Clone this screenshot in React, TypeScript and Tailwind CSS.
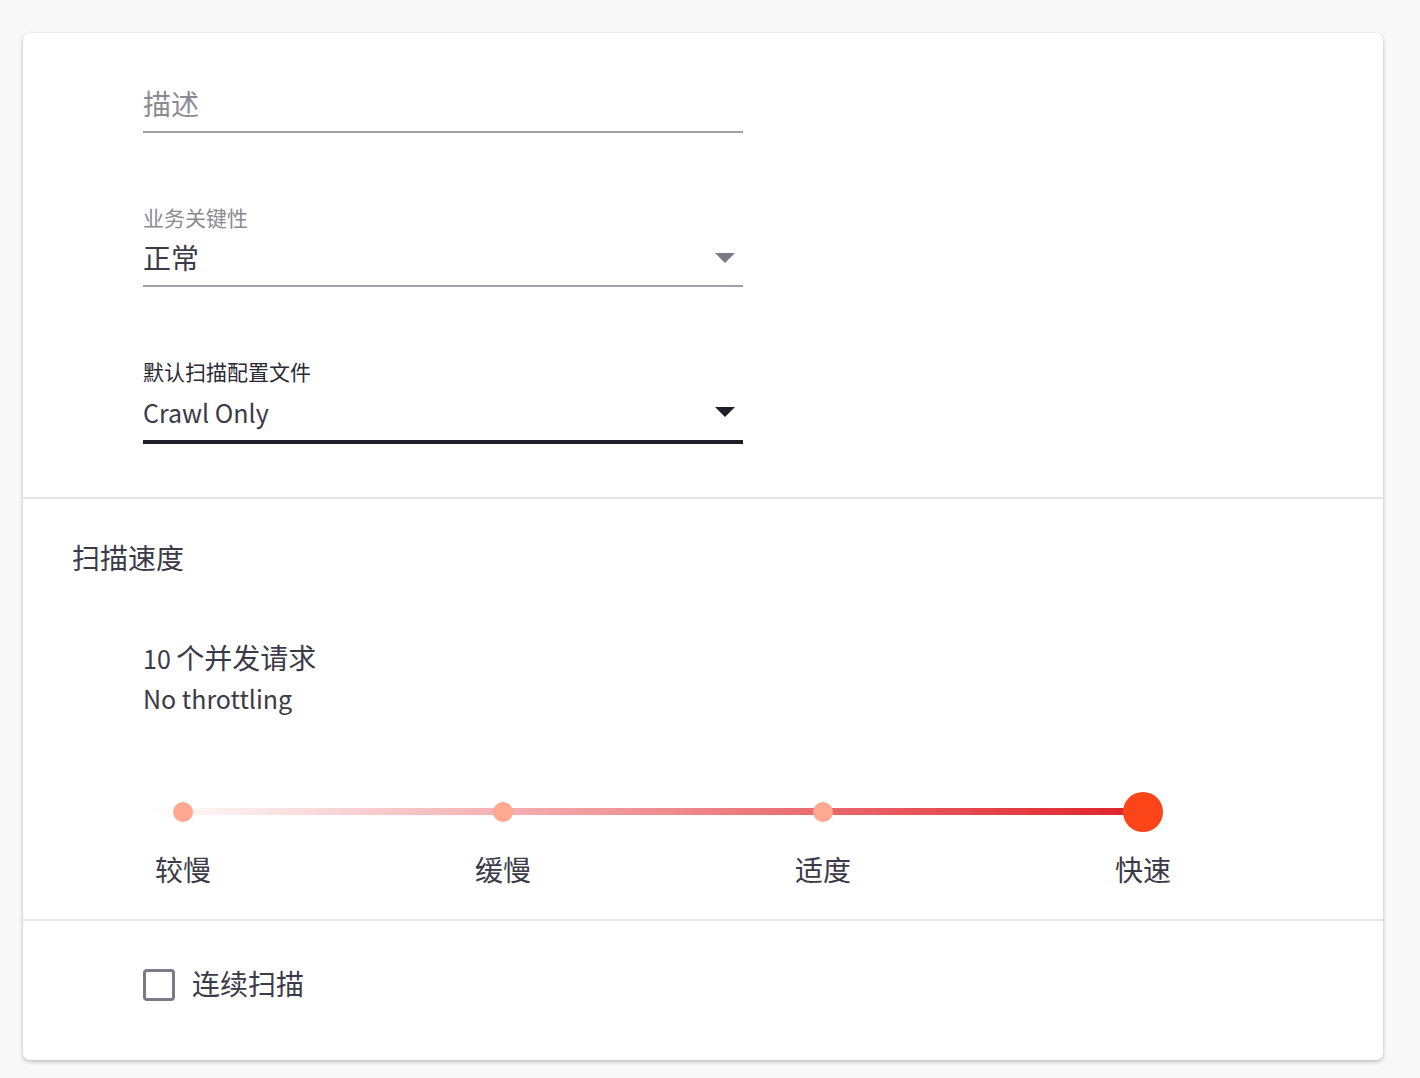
import React from 'react';

const font = { fontFamily: '"Noto Sans CJK SC", "Noto Sans", sans-serif' };

function Arrow({ dark }: { dark?: boolean }) {
  return (
    <svg width="20" height="10" viewBox="0 0 20 10" className="mr-[8px] mt-[2px]">
      <path d="M0 0 L20 0 L10 10 Z" fill={dark ? '#1f1e2a' : '#7b7a85'} />
    </svg>
  );
}

interface FieldProps {
  label?: string;
  value: React.ReactNode;
  placeholder?: boolean;
  focused?: boolean;
  select?: boolean;
  className?: string;
}

function Field({ label, value, placeholder, focused, select, className = '' }: FieldProps) {
  return (
    <div className={`w-[600px] ${className}`}>
      <div className={`h-[28px] text-[21px] leading-[28px] ${focused ? 'text-[#2a2936]' : 'text-[#8b8a93]'}`}>
        {label}
      </div>
      <div className="mt-[6px] flex h-[40px] items-center justify-between">
        <span className={`text-[28px] leading-[40px] ${placeholder ? 'text-[#8b8a93]' : 'text-[#3b3a48]'}`}>
          {value}
        </span>
        {select && <Arrow dark={focused} />}
      </div>
      {focused ? (
        <div className="mt-[9px] h-[4px] bg-[#1f1e2a]" />
      ) : (
        <div className="mt-[8px] h-[2px] bg-[#a09fa7]" />
      )}
    </div>
  );
}

const speeds = ['较慢', '缓慢', '适度', '快速'];

export default function App() {
  return (
    <div className="min-h-screen bg-[#f8f8f8] pt-[33px] pl-[23px] pb-[18px]" style={font}>
      <div className="w-[1360px] rounded-[7px] bg-white shadow-[0_2px_4px_rgba(0,0,0,0.22),0_0_3px_rgba(0,0,0,0.06)]">
        {/* Details */}
        <div className="border-b-2 border-[#e4e4e6] pt-[16px] pb-[53px] pl-[120px]">
          <Field value="描述" placeholder />
          <Field className="mt-[70px]" label="业务关键性" value="正常" select />
          <Field
            className="mt-[70px]"
            label="默认扫描配置文件"
            value={<span className="text-[25px]">Crawl Only</span>}
            select
            focused
          />
        </div>

        {/* Scan speed */}
        <div className="border-b-2 border-[#e4e4e6] pt-[38px] pb-[30px] text-[#3b3a48]">
          <div className="pl-[49px] text-[28px] leading-[40px]">扫描速度</div>
          <div className="mt-[60px] pl-[120px] text-[28px] leading-[40px]">
            <div className="h-[40px]">
              <span className="text-[25px]">10 </span>个并发请求
            </div>
            <div className="h-[40px]">
              <span className="text-[25px]">No throttling</span>
            </div>
          </div>

          <div className="relative mt-[75px] h-[40px]">
            <div className="absolute left-[125px] top-[16px] h-[7px] w-[1000px] rounded-full bg-[linear-gradient(to_right,#ffffff,#df2027)]" />
            <div className="relative flex h-[40px]">
              {speeds.map((s, i) => (
                <div key={s} className="flex w-[320px] items-center justify-center">
                  {i === speeds.length - 1 ? (
                    <div className="h-[40px] w-[40px] rounded-full bg-[#fc4518]" />
                  ) : (
                    <div className="h-[20px] w-[20px] rounded-full bg-[#ffa891]" />
                  )}
                </div>
              ))}
            </div>
          </div>

          <div className="mt-[17px] flex">
            {speeds.map((s) => (
              <div key={s} className="w-[320px] text-center text-[28px] leading-[40px]">
                {s}
              </div>
            ))}
          </div>
        </div>

        {/* Continuous */}
        <div className="flex items-start pt-[42px] pb-[57px] pl-[120px]">
          <div className="mt-[6px] h-[32px] w-[32px] rounded-[4px] border-[3px] border-[#7b7a85]" />
          <span className="ml-[17px] text-[28px] leading-[40px] text-[#3b3a48]">连续扫描</span>
        </div>
      </div>
    </div>
  );
}
